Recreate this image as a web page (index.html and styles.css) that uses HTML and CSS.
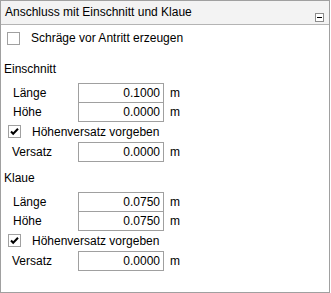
FILE: index.html
```html
<!DOCTYPE html>
<html lang="de">
<head>
    <meta charset="UTF-8">
    <title>Anschluss mit Einschnitt und Klaue</title>
    <link rel="stylesheet" href="styles.css">
</head>
<body>
    <div class="panel">
        <div class="panel-header">
            <span class="panel-title">Anschluss mit Einschnitt und Klaue</span>
            <span class="collapse-btn"><span class="minus"></span></span>
        </div>

        <label class="check top-check">
            <span class="box"></span>
            <span>Schräge vor Antritt erzeugen</span>
        </label>

        <div class="section">
            <div class="section-title">Einschnitt</div>
            <div class="field">
                <span class="field-label">Länge</span>
                <span class="value">0.1000</span>
                <span class="unit">m</span>
            </div>
            <div class="field joined">
                <span class="field-label">Höhe</span>
                <span class="value">0.0000</span>
                <span class="unit">m</span>
            </div>
            <label class="check sub-check">
                <span class="box">
                    <svg width="11" height="11" viewBox="0 0 11 11"><path d="M2 5.5 L4.2 7.8 L9 2.8" fill="none" stroke="#000" stroke-width="2"/></svg>
                </span>
                <span>Höhenversatz vorgeben</span>
            </label>
            <div class="field">
                <span class="field-label versatz">Versatz</span>
                <span class="value">0.0000</span>
                <span class="unit">m</span>
            </div>
        </div>

        <div class="section">
            <div class="section-title">Klaue</div>
            <div class="field">
                <span class="field-label">Länge</span>
                <span class="value">0.0750</span>
                <span class="unit">m</span>
            </div>
            <div class="field joined">
                <span class="field-label">Höhe</span>
                <span class="value">0.0750</span>
                <span class="unit">m</span>
            </div>
            <label class="check sub-check">
                <span class="box">
                    <svg width="11" height="11" viewBox="0 0 11 11"><path d="M2 5.5 L4.2 7.8 L9 2.8" fill="none" stroke="#000" stroke-width="2"/></svg>
                </span>
                <span>Höhenversatz vorgeben</span>
            </label>
            <div class="field">
                <span class="field-label versatz">Versatz</span>
                <span class="value">0.0000</span>
                <span class="unit">m</span>
            </div>
        </div>
    </div>
</body>
</html>
```

FILE: styles.css
```css
body {
    margin: 0;
    background: #fff;
    font-family: "Liberation Sans", Arial, sans-serif;
    font-size: 12px;
    color: #000;
}
.panel {
    box-sizing: border-box;
    width: 330px;
    height: 293px;
    border: 1px solid #a0a0a0;
    background: #fff;
}
.panel-header {
    height: 23px;
    background: #f3f3f3;
    border-bottom: 1px solid #b4b4b4;
    display: flex;
    align-items: center;
    padding-left: 4px;
    padding-right: 5px;
}
.panel-title {
    flex: 1;
    line-height: 16px;
    margin-top: -1px;
}
.collapse-btn {
    box-sizing: border-box;
    width: 9px;
    height: 9px;
    border: 1px solid #8c8c8c;
    background: #fff;
    display: flex;
    align-items: center;
    justify-content: center;
    margin-top: 9px;
}
.minus {
    width: 5px;
    height: 1px;
    background: #000;
}
.check {
    display: flex;
    align-items: center;
    line-height: 16px;
}
.box {
    box-sizing: border-box;
    width: 13px;
    height: 13px;
    border: 1px solid #a0a0a0;
    background: #fff;
    display: flex;
    align-items: center;
    justify-content: center;
}
.top-check {
    margin-top: 5px;
    padding-left: 6px;
    gap: 11px;
}
.section {
    padding-left: 3px;
}
.section-title {
    line-height: 16px;
    margin-top: 15px;
    margin-bottom: 6px;
}
.section + .section .section-title {
    margin-top: 8px;
}
.field {
    display: flex;
    align-items: center;
    height: 20px;
}
.field.joined {
    margin-top: -1px;
}
.field-label {
    width: 65px;
    padding-left: 9px;
}
.field-label.versatz {
    padding-left: 8px;
    width: 66px;
}
.value {
    box-sizing: border-box;
    width: 86px;
    height: 20px;
    border: 1px solid #a0a0a0;
    text-align: right;
    padding-right: 3px;
    line-height: 18px;
}
.unit {
    margin-left: 6px;
}
.sub-check {
    margin: 3px 0 4px 4px;
    gap: 11px;
    height: 13px;
}
```
